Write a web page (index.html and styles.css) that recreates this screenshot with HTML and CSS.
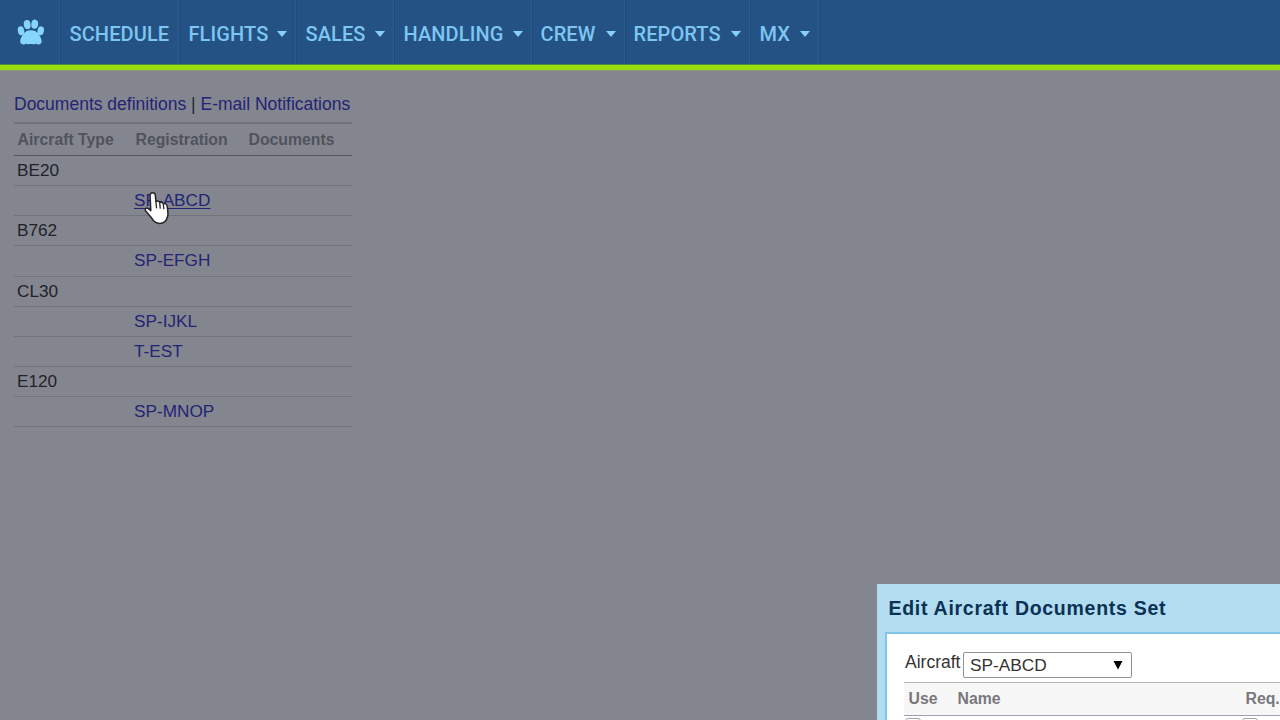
FILE: index.html
```html
<!DOCTYPE html>
<html lang="en">
<head>
<meta charset="utf-8">
<title>Aircraft documents</title>
<link rel="stylesheet" href="styles.css">
</head>
<body>
<div class="page">
  <nav class="nav">
    <a class="item home"><svg class="paw" width="28" height="28" viewBox="0 0 28 28"><ellipse cx="10.200" cy="6.600" rx="3.400" ry="4.600" transform="rotate(-8 10.2 6.6)"/><ellipse cx="17.700" cy="6.200" rx="3.400" ry="4.600" transform="rotate(8 17.7 6.2)"/><ellipse cx="4" cy="12.800" rx="3.200" ry="4.500" transform="rotate(-10 4 12.8)"/><ellipse cx="23.700" cy="12.800" rx="3.200" ry="4.500" transform="rotate(12 23.700 12.8)"/><path d="M13.900 12.200c4 0 6.500 1.600 8.300 4.800 1.300 2.300 2.600 3.900 2.400 6.500-.2 2.800-3 3.600-4.800 2.400-1.200-.5-2.200.8-3.500.4-1.300-.5-3.100-.5-4.400 0-1.300.4-2.300-.9-3.500-.4-1.900 1.200-5 .4-5.200-2.400-.2-2.600 1.300-4.200 2.500-6.500 1.800-3.200 4.200-4.800 8.200-4.800z"/></svg></a>
    <a class="item schedule"><span>SCHEDULE</span></a>
    <a class="item flights"><span>FLIGHTS</span><i class="caret"></i></a>
    <a class="item sales"><span>SALES</span><i class="caret"></i></a>
    <a class="item handling"><span>HANDLING</span><i class="caret"></i></a>
    <a class="item crew"><span>CREW</span><i class="caret"></i></a>
    <a class="item reports"><span>REPORTS</span><i class="caret"></i></a>
    <a class="item mx"><span>MX</span><i class="caret"></i></a>
  </nav>
  <main class="content">
    <div class="links"><a>Documents definitions</a> | <a>E-mail Notifications</a></div>
    <div class="list">
      <div class="row head"><span>Aircraft Type</span><span>Registration</span><span>Documents</span></div>
      <div class="row"><span>BE20</span></div>
      <div class="row"><span></span><a class="hover">SP-ABCD</a></div>
      <div class="row"><span>B762</span></div>
      <div class="row"><span></span><a>SP-EFGH</a></div>
      <div class="row"><span>CL30</span></div>
      <div class="row"><span></span><a>SP-IJKL</a></div>
      <div class="row"><span></span><a>T-EST</a></div>
      <div class="row"><span>E120</span></div>
      <div class="row"><span></span><a>SP-MNOP</a></div>
    </div>
  </main>
  <section class="dialog">
    <h2 class="title">Edit Aircraft Documents Set</h2>
    <div class="panel">
      <div class="field"><label>Aircraft</label><div class="select"><span>SP-ABCD</span><svg width="10" height="10" viewBox="0 0 10 10"><path d="M.5 1h9L5 9.500z"/></svg></div></div>
      <div class="thead"><span>Use</span><span>Name</span><span>Req.</span></div>
      <div class="trow"><i class="box"></i><span></span><i class="box"></i></div>
    </div>
  </section>
  <svg class="cursor" width="26" height="36" viewBox="0 0 26 36"><path d="M8.600 1.700c1.600 0 2.600 1 2.700 2.600l.6 6.200c.6-.8 3.300-.7 3.800 1.100.8-.8 3.200-.5 3.700 1.300 1.300-.8 3.400-.1 3.700 2 .6 3.600 1.400 7.300.5 10.600-1.100 4.500-3.800 6.900-7.900 6.900-4 0-6.300-2.300-8-5.300L1.900 20.300c-1.500-2.300.3-4.200 2.500-2.700l2.400 2L6.100 4.500c-.1-1.700.9-2.800 2.500-2.800z"/><path class="fingers" d="M11.900 10.500l.6 6.300M15.700 12l.5 5.200M19.400 13.500l.4 4.200"/></svg>
</div>
</body>
</html>
```
FILE: styles.css
```css
* { box-sizing: border-box; }
body { margin: 0; background: #83868f; font-family: "Liberation Sans", Arial, sans-serif; }
.page { position: relative; width: 1280px; height: 720px; overflow: hidden; background: #83868f; }
.nav { display: flex; height: 70px; background: #245284; border-bottom: 5px solid #9ade12; box-shadow: inset 0 -1px #4b8a45, 0 1px #8c9a7b; }
.item { display: flex; align-items: center; height: 64px; padding: 3px 0 0 8px; border-right: 1px solid #1f4b7b; box-shadow: inset -1px 0 #2b5b8b; color: #7cc6f1; font: 500 20px Roboto, sans-serif; letter-spacing: .1px; }
.item span { white-space: nowrap; margin-left: -.5px; }
.home { width: 61px; padding: 0 0 0 17px; }
.paw { fill: #85d5fd; }
.schedule { width: 119px; padding-left: 9px; }
.flights { width: 117px; padding-left: 9px; }
.sales { width: 98px; padding-left: 9px; }
.handling { width: 138px; padding-left: 9px; }
.crew { width: 93px; }
.reports { width: 125px; }
.mx { width: 69px; padding-left: 9px; }
.caret { margin-left: auto; margin-right: 9px; border: 5px solid transparent; border-top: 6px solid #86d1f9; border-bottom: 0; }
.content { width: 352px; padding: 22px 0 0 14px; }
.links { height: 30px; line-height: 25px; font-size: 17.5px; white-space: nowrap; color: #262a34; }
.content a { color: #242474; }
.list { border-top: 2px solid #70737c; }
.row { display: grid; grid-template-columns: 117px 113px 1fr; height: 30.150px; padding-left: 3px; align-items: center; justify-items: start; border-bottom: 1px solid #71747d; font-size: 17.2px; color: #1f222a; }
.head { height: 32px; padding: 1px 0 0 3.500px; grid-template-columns: 118px 113px 1fr; border-bottom: 1px solid #54575f; font-size: 15.800px; font-weight: bold; color: #50535b; }
.hover { text-decoration: underline; text-underline-offset: 2px; }
.dialog { position: absolute; left: 877px; top: 584px; width: 600px; height: 300px; padding-left: 8px; background: #b2dcf0; }
.title { margin: 0; height: 48px; padding-left: 3.500px; line-height: 49px; font-size: 19.500px; letter-spacing: .72px; color: #0b3154; }
.panel { height: 240px; border: 2px solid #83c3e9; border-right: 0; padding: 17px 0 0 17px; background: #fff; }
.field { display: flex; height: 31px; font-size: 17.500px; color: #333; }
.field label { width: 59px; padding-left: 1px; line-height: 22px; }
.select { display: flex; align-items: center; justify-content: space-between; width: 169px; height: 26px; margin-top: 1px; padding: 0 8px 0 6px; border: 1px solid #929292; border-radius: 2px; background: #fff; font-size: 17.300px; }
.thead { display: grid; grid-template-columns: 49px 288px 1fr; height: 34px; padding-left: 4.500px; align-items: center; background: #f7f7f8; border-top: 1px solid #b5b5b8; border-bottom: 1px solid #9ba2b4; font-size: 15.800px; font-weight: bold; color: #77777c; }
.trow { display: grid; grid-template-columns: 49px 288px 1fr; padding: 2px 0 0 1px; }
.box { width: 16px; height: 16px; border: 1px solid #a4a0a9; border-radius: 3px; }
.cursor { position: absolute; left: 144px; top: 191px; fill: #fff; stroke: #25262b; stroke-width: 1.500px; stroke-linejoin: round; stroke-linecap: round; }
.cursor .fingers { fill: none; stroke-width: 1.300px; }
```
